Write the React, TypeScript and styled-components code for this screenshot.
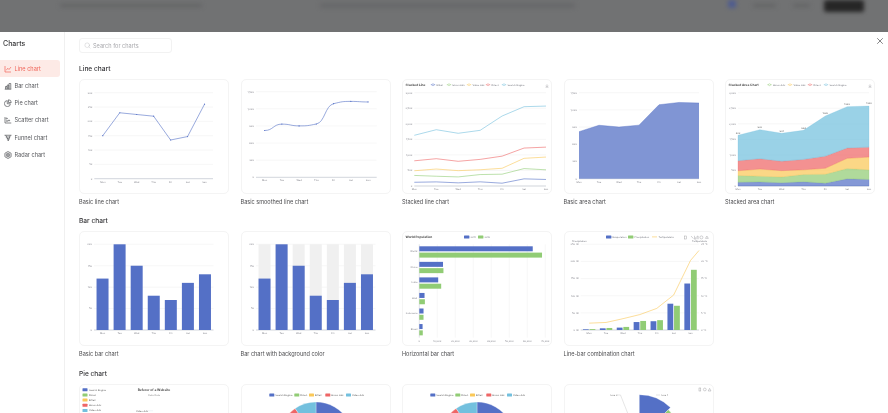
import { ReactNode } from 'react';
import styled, { createGlobalStyle } from 'styled-components';
import { X, Search } from 'lucide-react';

const GlobalStyle = createGlobalStyle`
	html, body {
		margin: 0;
		padding: 0;
		background: #fff;
		font-family: Inter, "Noto Sans", sans-serif;
	}
`;

const Page = styled.div`
	width: 888px;
	height: 413px;
	overflow: hidden;
	display: flex;
	flex-direction: column;
	filter: blur(0.45px);
`;

const Backdrop = styled.div`
	height: 32px;
	flex: none;
	background: #717273;
	overflow: hidden;
`;

const BackdropRow = styled.div`
	display: flex;
	align-items: flex-start;
	height: 32px;
	padding-left: 60px;
	filter: blur(2px);
`;

const Smudge = styled.span<{ $w: number; $h?: number; $ml?: number; $mt?: number; $color?: string }>`
	flex: none;
	width: ${(p) => p.$w}px;
	height: ${(p) => p.$h ?? 3}px;
	margin-left: ${(p) => p.$ml ?? 0}px;
	margin-top: ${(p) => p.$mt ?? 4}px;
	border-radius: 2px;
	background: ${(p) => p.$color ?? '#626364'};
`;

const Modal = styled.div`
	flex: 1;
	display: flex;
	min-height: 0;
	background: #fff;
	position: relative;
`;

const Sidebar = styled.aside`
	width: 64px;
	flex: none;
	border-right: 1px solid #f0f0f0;
	padding-top: 7px;
	box-sizing: content-box;
`;

const SideTitle = styled.div`
	height: 10px;
	line-height: 10px;
	margin: 0 0 11px 3px;
	font-size: 7px;
	font-weight: 500;
	color: #3a3a3c;
`;

const NavItem = styled.div<{ $active?: boolean }>`
	width: 60px;
	height: 17.25px;
	display: flex;
	align-items: center;
	gap: 3px;
	padding-left: 3.5px;
	box-sizing: border-box;
	border-radius: 0 3px 3px 0;
	font-size: 5.6px;
	background: ${(p) => (p.$active ? '#fdeae6' : 'transparent')};
	color: ${(p) => (p.$active ? '#f0665a' : '#55565a')};
`;

const Main = styled.main`
	flex: 1;
	min-width: 0;
	padding: 6px 0 0 14px;
	overflow: hidden;
`;

const SearchBox = styled.div`
	width: 93px;
	height: 15px;
	box-sizing: border-box;
	display: flex;
	align-items: center;
	gap: 2.5px;
	padding-left: 3.5px;
	margin-bottom: 11px;
	border: 1px solid #f2f2f2;
	border-radius: 3px;
	font-size: 5.6px;
	color: #a9a9ad;
`;

const CloseButton = styled.button`
	position: absolute;
	top: 4px;
	right: 3.5px;
	width: 10px;
	height: 10px;
	padding: 0;
	border: 0;
	background: none;
	color: #3c3c3e;
	display: flex;
`;

const Section = styled.section`
	margin-bottom: 10.3px;
`;

const SectionTitle = styled.h2`
	margin: 0 0 5px;
	height: 10px;
	line-height: 10px;
	font-size: 6.6px;
	font-weight: 500;
	color: #333336;
`;

const CardGrid = styled.div`
	display: grid;
	grid-template-columns: repeat(5, 150px);
	column-gap: 11.5px;
`;

const Card = styled.div`
	height: 115px;
	box-sizing: border-box;
	border: 1px solid #f4f4f4;
	border-radius: 5px;
	overflow: hidden;
`;

const CardLabel = styled.div`
	margin-top: 4px;
	height: 8px;
	line-height: 8px;
	font-size: 5.55px;
	color: #4a4a4d;
	white-space: nowrap;
`;

const ChartSvg = styled.svg`
	display: block;
	margin: -1px;
	width: 150px;
	height: 115px;
	font-family: Inter, sans-serif;
	text-rendering: geometricPrecision;
`;

const C = { blue: '#5470c6', green: '#91cc75', yellow: '#fac858', red: '#ee6666', sky: '#73c0de' };
const DAYS = ['Mon', 'Tue', 'Wed', 'Thu', 'Fri', 'Sat', 'Sun'];
const TOTAL = [820, 932, 901, 934, 1290, 1330, 1320];
const BARS = [120, 200, 150, 80, 70, 110, 130];
const STACK = [
	{ name: 'Email', color: C.blue, data: [120, 132, 101, 134, 90, 230, 210] },
	{ name: 'Union Ads', color: C.green, data: [220, 182, 191, 234, 290, 330, 310] },
	{ name: 'Video Ads', color: C.yellow, data: [150, 232, 201, 154, 190, 330, 410] },
	{ name: 'Direct', color: C.red, data: [320, 332, 301, 334, 390, 330, 320] },
	{ name: 'Search Engine', color: C.sky, data: TOTAL }
];

type Pt = [number, number];

const poly = (pts: Pt[]) => pts.map((p) => p.join(',')).join(' ');

// monotone curve, close to what echarts draws for smooth: true
function smoothPath(pts: Pt[]) {
	const slope = (a: Pt, b: Pt) => (b[1] - a[1]) / (b[0] - a[0]);
	const m = pts.map((p, i) => {
		if (i === 0 || i === pts.length - 1) return 0;
		const a = slope(pts[i - 1], p);
		const b = slope(p, pts[i + 1]);
		return a * b <= 0 ? 0 : (2 * a * b) / (a + b);
	});
	let d = `M${pts[0][0]},${pts[0][1]}`;
	for (let i = 1; i < pts.length; i++) {
		const dx = (pts[i][0] - pts[i - 1][0]) * 0.5;
		d += ` C${pts[i - 1][0] + dx},${pts[i - 1][1] + m[i - 1] * dx} ${pts[i][0] - dx},${pts[i][1] - m[i] * dx} ${pts[i][0]},${pts[i][1]}`;
	}
	return d;
}

interface GridProps {
	x0: number;
	x1: number;
	y0: number;
	y1: number;
	yLabels: string[];
	edge?: boolean;
}

// y0 is the top gridline, y1 the axis; yLabels run from the top down
function DayGrid({ x0, x1, y0, y1, yLabels, edge }: GridProps) {
	const step = (y1 - y0) / (yLabels.length - 1);
	const band = (x1 - x0) / (edge ? 6 : 7);
	return (
		<g fontSize="2.5" fill="#7c7d85">
			{yLabels.map((label, i) => (
				<g key={label}>
					<line x1={x0} x2={x1} y1={y0 + i * step} y2={y0 + i * step} stroke={i === yLabels.length - 1 ? '#b4b8c4' : '#ececec'} strokeWidth={i === yLabels.length - 1 ? 0.6 : 0.4} />
					<text x={x0 - 2} y={y0 + i * step + 0.9} textAnchor="end">{label}</text>
				</g>
			))}
			{DAYS.map((day, i) => (
				<text key={day} x={x0 + (edge ? i * band : (i + 0.5) * band)} y={y1 + 3.8} textAnchor="middle">{day}</text>
			))}
		</g>
	);
}

const dayX = (x0: number, x1: number, i: number, edge?: boolean) =>
	edge ? x0 + (i * (x1 - x0)) / 6 : x0 + ((i + 0.5) * (x1 - x0)) / 7;

const TOTAL_TICKS = ['1,500', '1,200', '900', '600', '300', '0'];
const STACK_TICKS = ['3,000', '2,500', '2,000', '1,500', '1,000', '500', '0'];

function Toolbox({ x, y }: { x: number; y: number }) {
	return <path d={`M${x},${y - 1.6}v2.2m-1,-.9l1,1 1,-1M${x - 1.5},${y + 1.2}h3`} fill="none" stroke="#a5a5a8" strokeWidth="0.5" />;
}

function BasicLine() {
	const data = [150, 230, 224, 218, 135, 147, 260];
	const pts = data.map((v, i): Pt => [dayX(15.3, 134, i), 99.7 - (v / 300) * 86]);
	return (
		<ChartSvg viewBox="0 0 150 115">
			<DayGrid x0={15.3} x1={134} y0={13.7} y1={99.7} yLabels={['300', '250', '200', '150', '100', '50', '0']} />
			<polyline points={poly(pts)} fill="none" stroke={C.blue} strokeWidth="0.6" />
			{pts.map((p) => <circle key={p[0]} cx={p[0]} cy={p[1]} r="0.6" fill={C.blue} />)}
		</ChartSvg>
	);
}

function SmoothLine() {
	const pts = TOTAL.map((v, i): Pt => [dayX(15, 135.7, i), 98.3 - (v / 1500) * 85.6]);
	return (
		<ChartSvg viewBox="0 0 150 115">
			<DayGrid x0={15} x1={135.7} y0={12.7} y1={98.3} yLabels={TOTAL_TICKS} />
			<path d={smoothPath(pts)} fill="none" stroke={C.blue} strokeWidth="0.6" />
			{pts.map((p) => <circle key={p[0]} cx={p[0]} cy={p[1]} r="0.6" fill={C.blue} />)}
		</ChartSvg>
	);
}

function StackLegend({ items, marks }: { items: typeof STACK; marks: number[] }) {
	return (
		<g fontSize="2.5" fill="#6e7079">
			{items.map((s, i) => (
				<g key={s.name}>
					<line x1={marks[i] - 2.2} x2={marks[i] + 2.2} y1={5.7} y2={5.7} stroke={s.color} strokeWidth="0.5" />
					<circle cx={marks[i]} cy={5.7} r="1" fill="#fff" stroke={s.color} strokeWidth="0.4" />
					<text x={marks[i] + 3.5} y={6.6}>{s.name}</text>
				</g>
			))}
		</g>
	);
}

const stacked = () => {
	const sums = DAYS.map(() => 0);
	return STACK.map((s) => {
		const lower = [...sums];
		s.data.forEach((v, i) => {
			sums[i] += v;
		});
		return { ...s, lower, upper: [...sums] };
	});
};

function StackedLine() {
	const toY = (v: number) => 107 - (v / 3000) * 93.3;
	return (
		<ChartSvg viewBox="0 0 150 115">
			<text x="3.5" y="6.7" fontSize="3.2" fontWeight="700" fill="#464646">Stacked Line</text>
			<StackLegend items={STACK} marks={[31, 47, 67, 86, 102]} />
			<Toolbox x={145} y={7} />
			<DayGrid x0={12.3} x1={144} y0={13.7} y1={107} yLabels={STACK_TICKS} edge />
			{stacked().map((s) => (
				<polyline key={s.name} points={poly(s.upper.map((v, i): Pt => [dayX(12.3, 144, i, true), toY(v)]))} fill="none" stroke={s.color} strokeWidth="0.6" />
			))}
		</ChartSvg>
	);
}

function BasicArea() {
	const pts = TOTAL.map((v, i): Pt => [dayX(15, 135, i, true), 99.7 - (v / 1500) * 86]);
	return (
		<ChartSvg viewBox="0 0 150 115">
			<DayGrid x0={15} x1={135} y0={13.7} y1={99.7} yLabels={TOTAL_TICKS} edge />
			<polygon points={poly([[15, 99.7], ...pts, [135, 99.7]])} fill="#8095d4" />
			<polyline points={poly(pts)} fill="none" stroke={C.blue} strokeWidth="0.4" />
		</ChartSvg>
	);
}

function StackedArea() {
	const toY = (v: number) => 107 - (v / 3000) * 93.3;
	const x = (i: number) => dayX(13, 144, i, true);
	const series = stacked();
	return (
		<ChartSvg viewBox="0 0 150 115">
			<DayGrid x0={13} x1={144} y0={13.7} y1={107} yLabels={STACK_TICKS} edge />
			{series.map((s) => (
				<polygon
					key={s.name}
					points={poly([
						...s.upper.map((v, i): Pt => [x(i), toY(v)]),
						...s.lower.map((v, i): Pt => [x(i), toY(v)]).reverse()
					])}
					fill={s.color}
					fillOpacity="0.72"
					stroke={s.color}
					strokeWidth="0.25"
				/>
			))}
			{series[4].upper.map((v, i) => (
				<text key={DAYS[i]} x={x(i)} y={toY(v) - 1.6} fontSize="2.5" textAnchor="middle" fill="#555">{TOTAL[i]}</text>
			))}
			<StackLegend items={STACK.slice(1)} marks={[44.5, 65, 85, 101]} />
			<text x="3.5" y="6.7" fontSize="3.2" fontWeight="700" fill="#464646">Stacked Area Chart</text>
			<Toolbox x={145} y={7} />
		</ChartSvg>
	);
}

function DayBars({ track }: { track?: boolean }) {
	const toH = (v: number) => (v / 200) * 85.7;
	return (
		<ChartSvg viewBox="0 0 150 115">
			<DayGrid x0={15} x1={134.5} y0={13.3} y1={99} yLabels={['200', '150', '100', '50', '0']} />
			{BARS.map((v, i) => {
				const cx = dayX(15, 134.5, i);
				return (
					<g key={DAYS[i]}>
						{track && <rect x={cx - 6} y={13.3} width="12" height="85.7" fill="#f0f0f0" />}
						<rect x={cx - 6} y={99 - toH(v)} width="12" height={toH(v)} fill={C.blue} />
					</g>
				);
			})}
		</ChartSvg>
	);
}

function HorizontalBars() {
	const names = ['World', 'China', 'India', 'USA', 'Indonesia', 'Brazil'];
	const first = [630230, 131744, 104970, 29034, 23489, 18203];
	const second = [681807, 134141, 121594, 31000, 23438, 19325];
	const ticks = ['0', '10,000', '20,000', '30,000', '40,000', '50,000', '60,000', '70,000'];
	const x0 = 17.3;
	const per = 18 / 100000;
	return (
		<ChartSvg viewBox="0 0 150 115">
			<text x="3.5" y="6.9" fontSize="3.2" fontWeight="700" fill="#464646">World Population</text>
			<rect x="62" y="4.6" width="5.4" height="3" rx="0.5" fill={C.blue} />
			<text x="68.4" y="6.9" fontSize="2.5" fill="#6e7079">2011</text>
			<rect x="76" y="4.6" width="5.4" height="3" rx="0.5" fill={C.green} />
			<text x="82.4" y="6.9" fontSize="2.5" fill="#6e7079">2012</text>
			{ticks.map((t, i) => (
				<g key={t}>
					<line x1={x0 + i * 18} x2={x0 + i * 18} y1="13.3" y2="106.6" stroke={i === 0 ? '#b4b8c4' : '#ececec'} strokeWidth="0.4" />
					<text x={x0 + i * 18} y="110.8" fontSize="2.5" fill="#7c7d85" textAnchor="middle">{t}</text>
				</g>
			))}
			{names.map((n, i) => {
				const top = 15.3 + i * 15.55;
				return (
					<g key={n}>
						<text x={x0 - 2} y={top + 5.8} fontSize="2.5" fill="#7c7d85" textAnchor="end">{n}</text>
						<rect x={x0} y={top} width={first[i] * per} height="5" fill={C.blue} />
						<rect x={x0} y={top + 6.3} width={second[i] * per} height="5" fill={C.green} />
					</g>
				);
			})}
		</ChartSvg>
	);
}

function LineBar() {
	const evap = [2, 4.9, 7, 23.2, 25.6, 76.7, 135.6];
	const rain = [2.6, 5.9, 9, 26.4, 28.7, 70.7, 175.6];
	const temp = [2, 2.2, 3.3, 4.5, 6.3, 10.2, 20.3];
	const left = ['250 ml', '200 ml', '150 ml', '100 ml', '50 ml', '0 ml'];
	const right = ['25 °C', '20 °C', '15 °C', '10 °C', '5 °C', '0 °C'];
	const x0 = 16.7;
	const x1 = 135;
	const y1 = 99;
	const h = (v: number) => (v / 250) * 85.7;
	const line: Pt[] = temp.map((v, i) => [dayX(x0, x1, i), y1 - (v / 25) * 85.7]);
	line.push([x1, 19.5]);
	return (
		<ChartSvg viewBox="0 0 150 115">
			<rect x="42" y="4.4" width="5.4" height="3" rx="0.5" fill={C.blue} />
			<text x="48.4" y="6.7" fontSize="2.5" fill="#6e7079">Evaporation</text>
			<rect x="64" y="4.4" width="5.4" height="3" rx="0.5" fill={C.green} />
			<text x="70.4" y="6.7" fontSize="2.5" fill="#6e7079">Precipitation</text>
			<line x1="88" x2="93" y1="5.9" y2="5.9" stroke={C.yellow} strokeWidth="0.6" />
			<text x="94.6" y="6.7" fontSize="2.5" fill="#6e7079">Temperature</text>
			<text x="8" y="10.6" fontSize="2.5" fill="#6e7079">Precipitation</text>
			<text x="128" y="10.6" fontSize="2.5" fill="#6e7079">Temperature</text>
			<g fill="none" stroke="#9d9da0" strokeWidth="0.45">
				<rect x="120.5" y="5" width="1.8" height="3" />
				<path d="M127,5l2.4,2.6M130.5,4.8v3.4h1.2v-2M133,8.2v-3h1.2v3" />
				<circle cx="137.4" cy="6.4" r="1.5" />
				<path d="M141.5,7.4l1.4,-2.4 1.4,2.4z" />
			</g>
			<DayGrid x0={x0} x1={x1} y0={13.3} y1={y1} yLabels={left} />
			{right.map((t, i) => (
				<text key={t} x={x1 + 2} y={13.3 + i * 17.14 + 0.9} fontSize="2.5" fill="#7c7d85">{t}</text>
			))}
			{DAYS.map((d, i) => {
				const cx = dayX(x0, x1, i);
				return (
					<g key={d}>
						<rect x={cx - 6.2} y={y1 - h(evap[i])} width="5.8" height={h(evap[i])} fill={C.blue} />
						<rect x={cx + 0.4} y={y1 - h(rain[i])} width="5.8" height={h(rain[i])} fill={C.green} />
					</g>
				);
			})}
			<polyline points={poly(line)} fill="none" stroke={C.yellow} strokeWidth="0.6" />
		</ChartSvg>
	);
}

function wedge(cx: number, cy: number, r: number, from: number, to: number) {
	const at = (deg: number): Pt => {
		const a = ((deg - 90) * Math.PI) / 180;
		return [cx + r * Math.cos(a), cy + r * Math.sin(a)];
	};
	const [ax, ay] = at(from);
	const [bx, by] = at(to);
	return `M${cx},${cy}L${ax},${ay}A${r},${r} 0 ${to - from > 180 ? 1 : 0} 1 ${bx},${by}Z`;
}

const PIE = [
	{ name: 'Search Engine', value: 1048, color: C.blue, mark: 28.3 },
	{ name: 'Direct', value: 735, color: C.green, mark: 53.3 },
	{ name: 'Email', value: 580, color: C.yellow, mark: 68 },
	{ name: 'Union Ads', value: 484, color: C.red, mark: 84.3 },
	{ name: 'Video Ads', value: 300, color: C.sky, mark: 105 }
];

function PieWedges({ cx, cy, r }: { cx: number; cy: number; r: number }) {
	const total = PIE.reduce((n, s) => n + s.value, 0);
	let angle = 0;
	return (
		<g>
			{PIE.map((s) => {
				const from = angle;
				angle += (s.value / total) * 360;
				return <path key={s.name} d={wedge(cx, cy, r, from, angle)} fill={s.color} stroke="#fff" strokeWidth="0.3" />;
			})}
		</g>
	);
}

function LegendPie() {
	return (
		<ChartSvg viewBox="0 0 150 115">
			{PIE.map((s, i) => (
				<g key={s.name}>
					<rect x="3.5" y={4.2 + i * 5.2} width="5" height="3" rx="0.5" fill={s.color} />
					<text x="10" y={6.6 + i * 5.2} fontSize="2.5" fill="#555">{s.name}</text>
				</g>
			))}
			<text x="75" y="6.8" fontSize="3.3" fontWeight="700" fill="#464646" textAnchor="middle">Referer of a Website</text>
			<text x="75" y="12" fontSize="2.5" fill="#8a8a8a" textAnchor="middle">Fake Data</text>
			<text x="57" y="27.6" fontSize="2.5" fill="#555">Video Ads</text>
			<line x1="69" x2="74" y1="26.8" y2="26.8" stroke="#d4e6ef" strokeWidth="0.4" />
		</ChartSvg>
	);
}

function TopLegendPie() {
	return (
		<ChartSvg viewBox="0 0 150 115">
			{PIE.map((s) => (
				<g key={s.name}>
					<rect x={s.mark} y="9.6" width="5" height="3" rx="0.5" fill={s.color} />
					<text x={s.mark + 6} y="12" fontSize="2.5" fill="#555">{s.name}</text>
				</g>
			))}
			<PieWedges cx={75} cy={55} r={37} />
		</ChartSvg>
	);
}

function RosePie() {
	const radii = [44, 41, 38, 35, 32, 29, 26, 23];
	const colors = [C.blue, C.green, C.yellow, C.red, C.sky, '#fc8452', '#9a60b4', '#ea7ccc'];
	return (
		<ChartSvg viewBox="0 0 150 115">
			{radii.map((r, i) => (
				<path key={r} d={wedge(75.3, 54.7, r, i * 45, (i + 1) * 45)} fill={colors[i]} stroke="#fff" strokeWidth="0.3" />
			))}
			<g fontSize="2.5" fill="#666">
				<text x="97" y="11.8">rose 1</text>
				<text x="46" y="11.8">rose 8</text>
			</g>
			<g fill="none" stroke="#b8b8b8" strokeWidth="0.35">
				<path d="M92,11h4" />
				<path d="M54,11h2.5L64,30" />
			</g>
			<g fill="none" stroke="#9d9da0" strokeWidth="0.45">
				<rect x="135" y="4" width="1.8" height="3" />
				<circle cx="140.8" cy="5.5" r="1.4" />
				<path d="M144.2,7l1.4,-2.6 1.4,2.6z" />
			</g>
		</ChartSvg>
	);
}

const ICON = { width: 8, height: 8, viewBox: '0 0 16 16', fill: 'none', stroke: 'currentColor', strokeWidth: 1.4 };

function LineIcon() {
	return <svg {...ICON}><path d="M2,2v12h12M4.500,10.500l3,-4 2.500,2.500 4,-5" /></svg>;
}
function BarIcon() {
	return <svg {...ICON}><path d="M1.500,14.500h13M3,14v-5h3v5M6.500,14v-8h3v8M10,14v-11h3.500v11" /></svg>;
}
function PieIcon() {
	return <svg {...ICON}><path d="M6.500,3.200a6,6 0 1 0 6.300,6.300h-6.300zM9,1.500v5.500h5.500a5.500,5.500 0 0 0 -5.500,-5.500z" /></svg>;
}
function ScatterIcon() {
	return <svg {...ICON}><path d="M2,2v12h12.500" /><circle cx="5.500" cy="5" r="1.200" /><circle cx="10" cy="9" r="1.200" /><circle cx="6" cy="10" r="1" /></svg>;
}
function FunnelIcon() {
	return <svg {...ICON}><path d="M1,2.500h14M3.500,6h9M5.500,9.500h5M7,13h2l-5.500,-10.500M9,13l3.500,-10.500" /></svg>;
}
function RadarIcon() {
	return <svg {...ICON}><path d="M8,1l6.200,3.500v7l-6.200,3.500l-6.200,-3.500v-7z" /><circle cx="8" cy="8" r="3.600" /><circle cx="8" cy="8" r="1.300" /></svg>;
}

const NAV: { label: string; icon: ReactNode }[] = [
	{ label: 'Line chart', icon: <LineIcon /> },
	{ label: 'Bar chart', icon: <BarIcon /> },
	{ label: 'Pie chart', icon: <PieIcon /> },
	{ label: 'Scatter chart', icon: <ScatterIcon /> },
	{ label: 'Funnel chart', icon: <FunnelIcon /> },
	{ label: 'Radar chart', icon: <RadarIcon /> }
];

const SECTIONS: { title: string; cards: { id: string; label?: string; chart: ReactNode }[] }[] = [
	{
		title: 'Line chart',
		cards: [
			{ id: 'line', label: 'Basic line chart', chart: <BasicLine /> },
			{ id: 'smooth', label: 'Basic smoothed line chart', chart: <SmoothLine /> },
			{ id: 'stack-line', label: 'Stacked line chart', chart: <StackedLine /> },
			{ id: 'area', label: 'Basic area chart', chart: <BasicArea /> },
			{ id: 'stack-area', label: 'Stacked area chart', chart: <StackedArea /> }
		]
	},
	{
		title: 'Bar chart',
		cards: [
			{ id: 'bar', label: 'Basic bar chart', chart: <DayBars /> },
			{ id: 'bar-bg', label: 'Bar chart with background color', chart: <DayBars track /> },
			{ id: 'bar-h', label: 'Horizontal bar chart', chart: <HorizontalBars /> },
			{ id: 'line-bar', label: 'Line-bar combination chart', chart: <LineBar /> }
		]
	},
	{
		title: 'Pie chart',
		cards: [
			{ id: 'pie-left', chart: <LegendPie /> },
			{ id: 'pie-top', chart: <TopLegendPie /> },
			{ id: 'pie-top-2', chart: <TopLegendPie /> },
			{ id: 'rose', chart: <RosePie /> }
		]
	}
];

function App() {
	return (
		<>
			<GlobalStyle />
			<Page>
				<Backdrop>
					<BackdropRow>
						<Smudge $w={142} />
						<Smudge $w={255} $h={5} $ml={118} $mt={3} $color="#67686a" />
						<Smudge $w={8} $h={8} $ml={153} $mt={0} $color="#4f5c90" />
						<Smudge $w={23} $ml={17} />
						<Smudge $w={17} $ml={17} />
						<Smudge $w={40} $h={12} $ml={14} $mt={0} $color="#262626" />
					</BackdropRow>
				</Backdrop>
				<Modal>
					<Sidebar>
						<SideTitle>Charts</SideTitle>
						{NAV.map((item, i) => (
							<NavItem key={item.label} $active={i === 0}>
								{item.icon}
								{item.label}
							</NavItem>
						))}
					</Sidebar>
					<Main>
						<SearchBox>
							<Search size={7} strokeWidth={1.2} color="#b5b5b8" />
							Search for charts
						</SearchBox>
						{SECTIONS.map((section) => (
							<Section key={section.title}>
								<SectionTitle>{section.title}</SectionTitle>
								<CardGrid>
									{section.cards.map((card) => (
										<div key={card.id}>
											<Card>{card.chart}</Card>
											{card.label && <CardLabel>{card.label}</CardLabel>}
										</div>
									))}
								</CardGrid>
							</Section>
						))}
					</Main>
					<CloseButton aria-label="Close">
						<X size={10} strokeWidth={1.5} />
					</CloseButton>
				</Modal>
			</Page>
		</>
	);
}

export default App;
